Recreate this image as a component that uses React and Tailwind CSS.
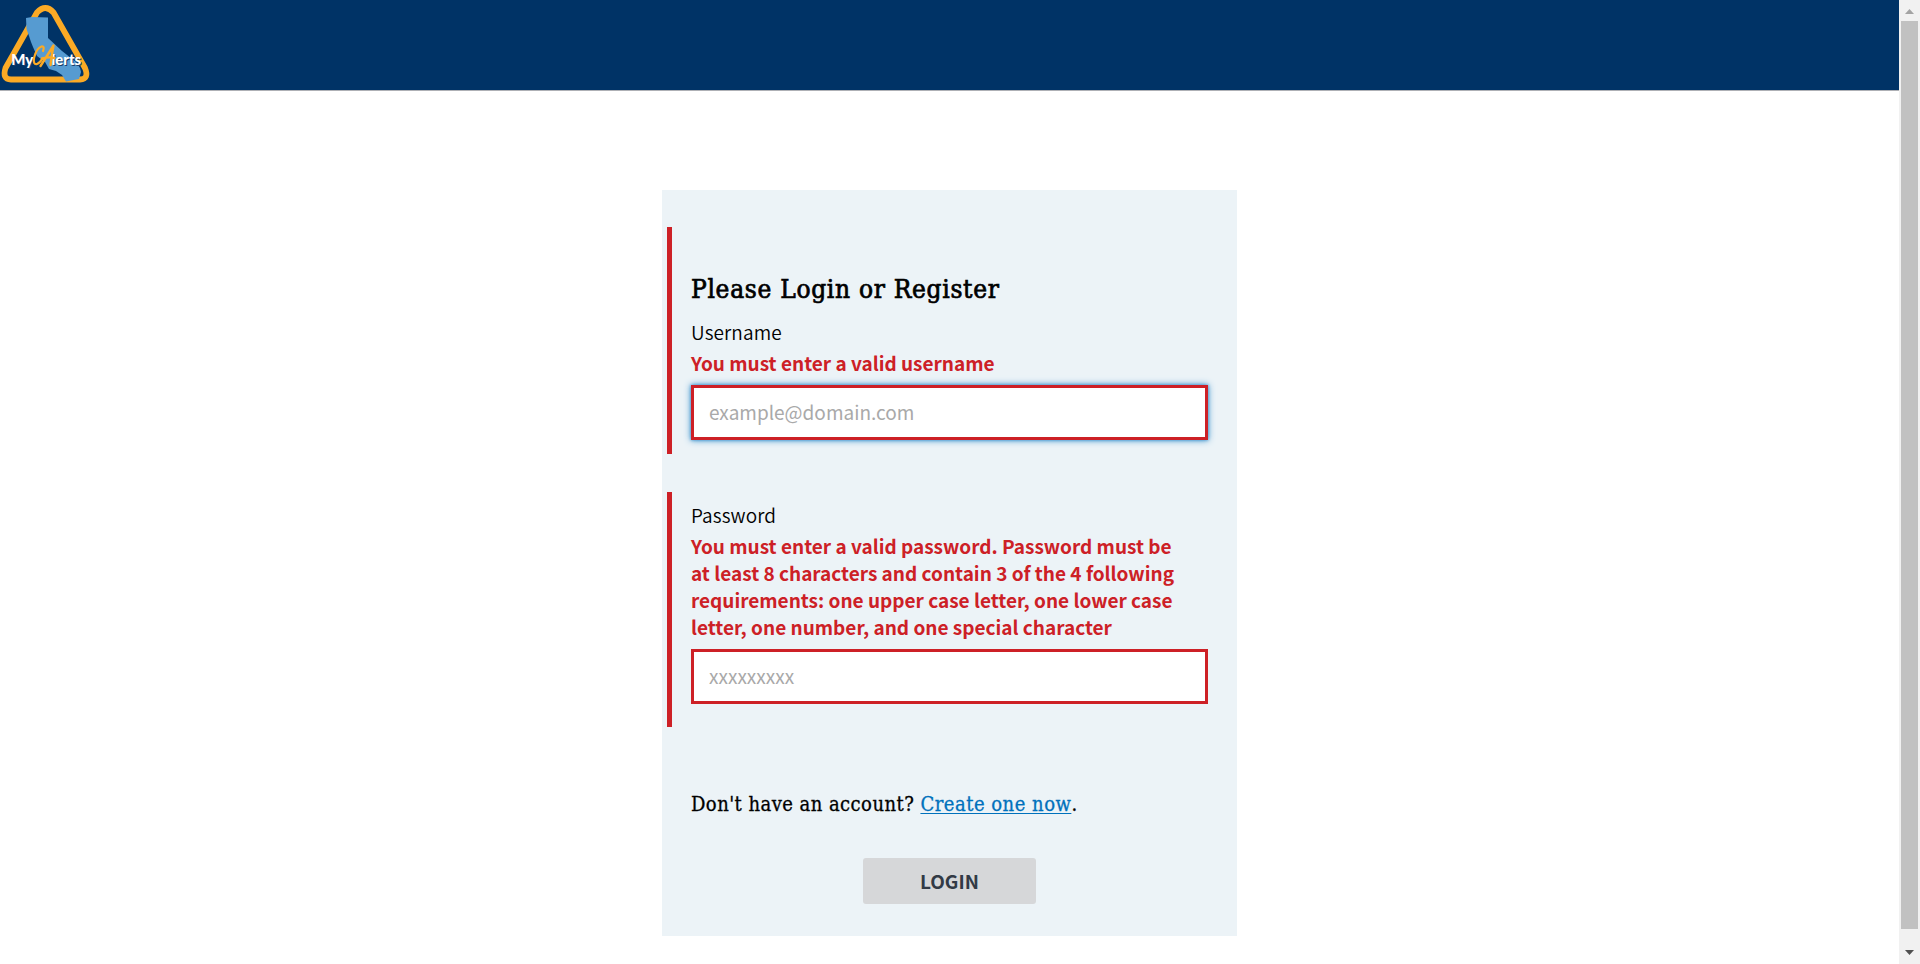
const sans = "font-['Noto_Sans_CJK_JP','Noto_Sans',sans-serif] text-[19px] leading-[27px]";
const serif = "font-['DejaVu_Serif_Condensed','DejaVu_Serif',serif] [font-stretch:condensed]";

function Logo() {
  return (
    <svg width="92" height="88" viewBox="0 0 92 88" className="block" role="img">
      <path
        d="M37 12.5 L5.5 68 Q2 79.2 11 79.5 H80 Q89.5 79 85 68 L53.5 12.5 Q45.5 3.5 37 12.5 Z"
        fill="none"
        stroke="#fbaa25"
        strokeWidth="5.8"
        strokeLinejoin="round"
      />
      <path
        d="M26 18 L32 17 L48 17.5 L48 38 L62 51 L76 62 L80 68 L81 72 L79 79 L66 81.5 L62 75 L56 71 L49 69 L45 62 L37 56 L33 47 L31 42 L29 36 L26.5 29 Z"
        fill="#569bd1"
      />
      <g className="font-['Lato',sans-serif]" fontWeight="900" fontSize="15.5">
        <text x="12.2" y="66.2" fill="#1b3f6b" textLength="22" lengthAdjust="spacingAndGlyphs">My</text>
        <text x="52.6" y="66.2" fill="#1b3f6b" textLength="29.5" lengthAdjust="spacingAndGlyphs">lerts</text>
        <text x="11.2" y="65.2" fill="#fff" textLength="22" lengthAdjust="spacingAndGlyphs">My</text>
        <text x="51.6" y="65.2" fill="#fff" textLength="29.5" lengthAdjust="spacingAndGlyphs">lerts</text>
      </g>
      <g fill="none" stroke="#fbaa25" strokeLinecap="round" strokeLinejoin="round">
        <path d="M43 51 Q45 46 41.5 46.5 Q36.5 48 34 58 Q33 65 37 64 Q40 63 42 59" strokeWidth="2.2" />
        <path d="M40.5 66 Q47 56 53.5 45.5 Q51.5 56 50.5 65 M42 58.5 Q49 56.5 54.5 58" strokeWidth="2.4" />
      </g>
    </svg>
  );
}

function Field({ label, error, placeholder, type, focused }) {
  return (
    <>
      <label className={`${sans} mt-1 block font-[350] tracking-[0.1px] text-black`}>{label}</label>
      <p className={`${sans} mt-1 max-w-[488px] font-bold text-[#cd2026]`}>{error}</p>
      <input
        type={type}
        placeholder={placeholder}
        className={`${sans} mt-[9px] block h-[55px] w-[517px] rounded-none border-3 border-[#cd2026] bg-white px-[15px] pb-[2px] outline-none placeholder:text-[#a9a9a9] ${
          focused ? "shadow-[0_0_3px_#3e94cf,0_0_7px_#3e94cf]" : ""
        }`}
      />
    </>
  );
}

function Scrollbar() {
  return (
    <div className="flex w-[21px] shrink-0 flex-col items-center justify-between bg-[#f1f1f1]">
      <svg width="21" height="21" className="block">
        <path d="M6 14 L10.5 9 L15 14 Z" fill="#a3a3a3" />
      </svg>
      <div className="w-[17px] flex-1 bg-[#c1c1c1]" />
      <svg width="21" height="35" className="block">
        <path d="M6 21 L10.5 26 L15 21 Z" fill="#505050" />
      </svg>
    </div>
  );
}

export default function App() {
  return (
    <div className="flex h-[964px] w-full overflow-hidden bg-white">
      <div className="flex flex-1 flex-col">
        <header className="h-[91px] border-b border-[#aeb0b5] bg-[#003366]">
          <Logo />
        </header>
        <main className="mx-auto mt-[99px] h-[746px] w-[575px] bg-[#ecf3f7] pl-[5px] pt-[37px]">
          <section className="h-[227px] border-l-5 border-[#cd2026] pl-[19px] pt-[43px]">
            <h1 className={`${serif} text-[26px] leading-[38px] tracking-[0.7px] text-black [-webkit-text-stroke:0.7px_black]`}>
              Please Login or Register
            </h1>
            <div className="pt-[6px]">
              <Field
                label="Username"
                error="You must enter a valid username"
                placeholder="example@domain.com"
                type="text"
                focused
              />
            </div>
          </section>
          <section className="mt-[38px] h-[235px] border-l-5 border-[#cd2026] pl-[19px] pt-[5px]">
            <Field
              label="Password"
              error="You must enter a valid password. Password must be at least 8 characters and contain 3 of the 4 following requirements: one upper case letter, one lower case letter, one number, and one special character"
              placeholder="xxxxxxxxx"
              type="password"
            />
          </section>
          <p className={`${serif} mt-[62px] pl-6 text-xl leading-[30px] tracking-[0.45px] text-black [-webkit-text-stroke:0.3px]`}>
            Don't have an account?{" "}
            <a href="#" className="tracking-[0.5px] text-[#0071bc] underline decoration-1 underline-offset-2">Create one now</a>.
          </p>
          <button className={`${sans} ml-[196px] mt-[39px] block h-[46px] w-[173px] rounded-[3px] bg-[#d6d7d9] pb-[2px] font-bold text-[#323a45]`}>
            LOGIN
          </button>
        </main>
      </div>
      <Scrollbar />
    </div>
  );
}
